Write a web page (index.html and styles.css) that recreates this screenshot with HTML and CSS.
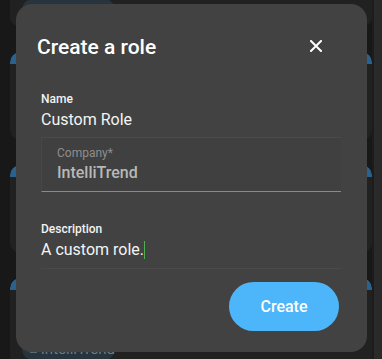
FILE: index.html
```html
<!DOCTYPE html>
<html>
<head>
<meta charset="utf-8">
<link rel="stylesheet" href="styles.css">
</head>
<body>
<div class="page">
  <div class="list">
    <div class="card card-first"><div class="card-top"></div><div class="chip"><span class="chip-icon"></span>IntelliTrend</div></div>
    <div class="card"><div class="card-top"></div><div class="chip"><span class="chip-icon"></span>IntelliTrend</div></div>
    <div class="card"><div class="card-top"></div><div class="chip"><span class="chip-icon"></span>IntelliTrend</div></div>
    <div class="card"><div class="card-top"></div><div class="chip"><span class="chip-icon"></span>IntelliTrend</div></div>
  </div>
  <div class="scrollbar"></div>
</div>

<div class="modal">
  <div class="modal-head">
    <h1 class="title">Create a role</h1>
    <button class="close" aria-label="Close">
      <svg width="12" height="12" viewBox="0 0 12 12"><path d="M1 1 L11 11 M11 1 L1 11" stroke="#fff" stroke-width="2" stroke-linecap="square"/></svg>
    </button>
  </div>
  <div class="field field-name">
    <div class="label">Name</div>
    <div class="value">Custom Role</div>
  </div>
  <div class="field field-company">
    <div class="label label-dim">Company*</div>
    <div class="value value-dim">IntelliTrend</div>
  </div>
  <div class="field field-desc">
    <div class="label">Description</div>
    <div class="value value-big">A custom role.<span class="caret"></span></div>
  </div>
  <div class="actions">
    <button class="create">Create</button>
  </div>
</div>
</body>
</html>
```

FILE: styles.css
```css
* { box-sizing: border-box; }
html, body { margin: 0; padding: 0; }
body {
  width: 382px;
  height: 359px;
  overflow: hidden;
  background: #181818;
  font-family: Roboto, "Noto Sans", sans-serif;
  position: relative;
}
.page {
  display: flex;
  height: 359px;
  padding-left: 10px;
}
.list {
  display: flex;
  flex-direction: column;
  gap: 25px;
  width: 362px;
  margin-top: -61px;
}
.card {
  flex: none;
  height: 88px;
  background: #212121;
  border-radius: 10px;
  overflow: hidden;
  position: relative;
}
.card-top {
  height: 12px;
  background: #2a628f;
  border-radius: 10px 10px 0 0;
}
.chip {
  position: absolute;
  left: 12px;
  top: 60px;
  height: 22px;
  width: 93px;
  border-radius: 11px;
  background: #27343d;
  color: #6f7c85;
  font-size: 15px;
  display: flex;
  align-items: center;
  gap: 4px;
  padding-left: 8px;
}
.chip-icon {
  width: 9px;
  height: 7px;
  background: #5d6870;
}
.scrollbar {
  width: 10px;
  height: 359px;
  background: #2a2a2a;
  border-left: 2px solid #1c1c1c;
}

.modal {
  position: absolute;
  left: 16px;
  top: 4px;
  width: 351px;
  height: 348px;
  background: #424242;
  border-radius: 16px;
  padding: 0 26px 0 25px;
  display: flex;
  flex-direction: column;
}
.modal-head {
  display: flex;
  align-items: center;
  justify-content: space-between;
  padding-top: 28px;
  margin-left: -4px;
  height: 57px;
}
.title {
  margin: 0;
  font-size: 21px;
  line-height: 24px;
  font-weight: 500;
  color: #ffffff;
  letter-spacing: 0;
}
.close {
  background: none;
  border: 0;
  padding: 0;
  width: 12px;
  height: 12px;
  margin-right: 19px;
  margin-top: -2px;
  display: flex;
}
.field {
  display: flex;
  flex-direction: column;
}
.label {
  font-size: 12px;
  line-height: 14px;
  font-weight: 500;
  color: #f2f2f2;
}
.value {
  font-size: 16px;
  line-height: 19px;
  color: #f4f4f4;
  margin-top: 4px;
}
.field-name {
  margin-top: 31px;
  padding-bottom: 8px;
  border-bottom: 1px solid #4a4a4a;
}
.field-company {
  padding: 8px 16px 9px 15px;
  background: #404040;
  border-left: 1px solid #474747;
  border-bottom: 1px solid #8a8a8a;
}
.label-dim {
  color: #8e8e8e;
  font-weight: 400;
}
.value-dim {
  color: #b8b8b8;
  font-weight: 500;
  margin-top: 3px;
}
.field-desc {
  margin-top: 30px;
  padding-bottom: 8px;
  border-bottom: 1px solid #4a4a4a;
}
.value-big {
  font-size: 16px;
  line-height: 21px;
  margin-top: 3px;
  display: flex;
  align-items: center;
}
.caret {
  display: inline-block;
  width: 1px;
  height: 18px;
  background: #4caf50;
  margin-left: 0;
}
.actions {
  display: flex;
  justify-content: flex-end;
  margin-top: 13px;
  padding-right: 2px;
}
.create {
  width: 110px;
  height: 49px;
  border: 0;
  border-radius: 25px;
  background: #4db5f9;
  color: #ffffff;
  font-family: Roboto, "Noto Sans", sans-serif;
  font-size: 16px;
  font-weight: 500;
}
```
